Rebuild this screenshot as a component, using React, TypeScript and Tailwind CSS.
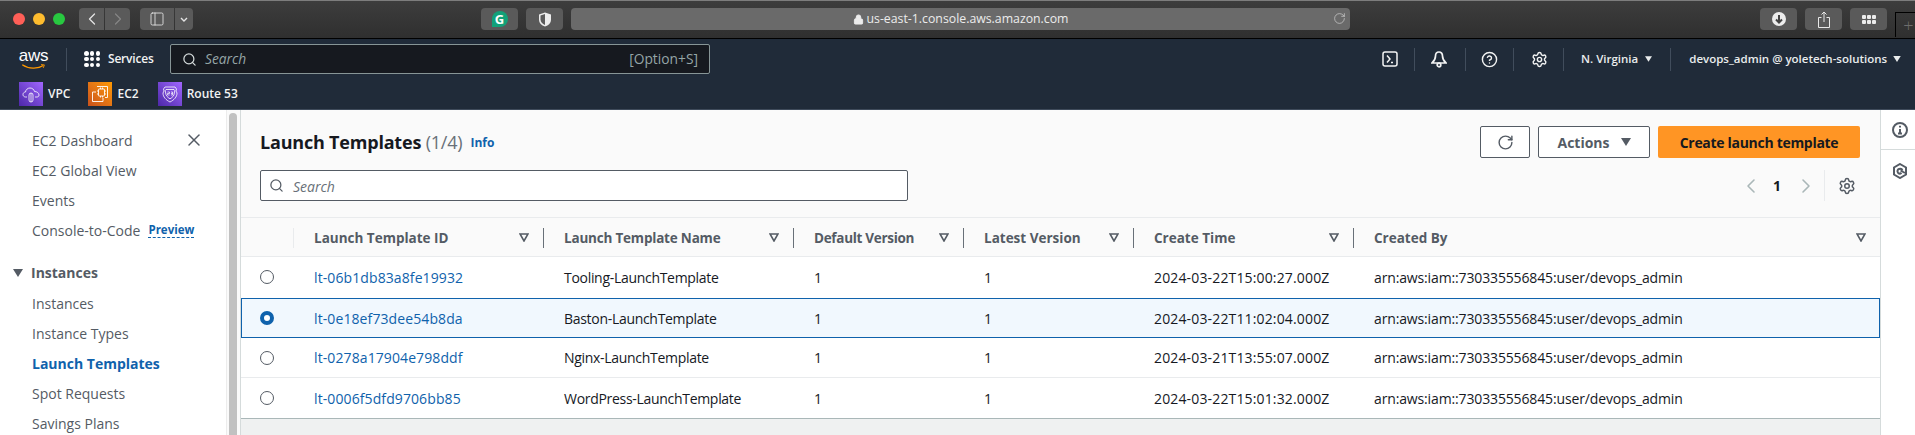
import { ChevronLeft, ChevronRight, CircleHelp, Lock, PanelLeft, RotateCw, Search, Settings, X } from "lucide-react";

const FONT = "font-['Open_Sans','Noto_Sans',sans-serif]";

const ROWS = [
  { id: "lt-06b1db83a8fe19932", name: "Tooling-LaunchTemplate", time: "2024-03-22T15:00:27.000Z", rowClass: "h-[41px] border-b border-transparent" },
  { id: "lt-0e18ef73dee54b8da", name: "Baston-LaunchTemplate", time: "2024-03-22T11:02:04.000Z", selected: true, rowClass: "h-[40px] bg-[#f1f8fe] outline outline-1 -outline-offset-1 outline-[#0f62ac]" },
  { id: "lt-0278a17904e798ddf", name: "Nginx-LaunchTemplate", time: "2024-03-21T13:55:07.000Z", rowClass: "h-[40px] border-b border-[#e9ebed]" },
  { id: "lt-0006f5dfd9706bb85", name: "WordPress-LaunchTemplate", time: "2024-03-22T15:01:32.000Z", rowClass: "h-[40px]" },
];

const COLUMNS = [
  { label: "Launch Template ID", className: "border-r border-[#687078]" },
  { label: "Launch Template Name", className: "border-r border-[#687078] tracking-[-0.2px]" },
  { label: "Default Version", className: "border-r border-[#687078] tracking-[-0.3px]" },
  { label: "Latest Version", className: "border-r border-[#687078]" },
  { label: "Create Time", className: "border-r border-[#687078]" },
  { label: "Created By", className: "" },
];

const GRID = "grid grid-cols-[53px_250px_250px_170px_170px_220px_1fr]";

function Caret({ className }: { className: string }) {
  return (
    <svg viewBox="0 0 10 8" className={className} fill="currentColor" aria-hidden>
      <path d="M0 0h10L5 8z" />
    </svg>
  );
}

function FilterIcon() {
  return (
    <svg viewBox="0 0 10 9" className="h-[9px] w-[10px] text-[#545b64]" fill="none" stroke="currentColor" strokeWidth="1.6" aria-hidden>
      <path d="M1 1h8L5 8z" />
    </svg>
  );
}

function Chrome({ className, children }: { className: string; children?: React.ReactNode }) {
  return <div className={`flex h-[22px] items-center justify-center rounded-[4px] bg-[#5a5a5a] ${className}`}>{children}</div>;
}

function BrowserBar() {
  return (
    <div className="flex h-[39px] shrink-0 items-center border-b border-t border-b-black border-t-[#7d7d7d] bg-gradient-to-b from-[#3d3d3d] to-[#2f2f2f] pb-[1px]">
      <span className="ml-[13px] h-[12px] w-[12px] rounded-full bg-[#ff5f57]" />
      <span className="ml-[8px] h-[12px] w-[12px] rounded-full bg-[#febc2e]" />
      <span className="ml-[8px] h-[12px] w-[12px] rounded-full bg-[#28c840]" />
      <Chrome className="ml-[14px] w-[25px] rounded-r-none">
        <ChevronLeft className="h-5 w-5 text-[#e4e4e4]" strokeWidth={1.5} />
      </Chrome>
      <Chrome className="ml-[1px] w-[25px] rounded-l-none">
        <ChevronRight className="h-5 w-5 text-[#858585]" strokeWidth={1.5} />
      </Chrome>
      <Chrome className="ml-[10px] w-[34px] rounded-r-none">
        <PanelLeft className="h-[16px] w-[16px] text-[#e4e4e4]" strokeWidth={1.3} />
      </Chrome>
      <Chrome className="ml-[1px] w-[18px] rounded-l-none">
        <svg viewBox="0 0 8 5" className="h-[5px] w-[8px] text-[#e4e4e4]" fill="none" stroke="currentColor" strokeWidth="1.4">
          <path d="M1 1l3 3 3-3" />
        </svg>
      </Chrome>
      <Chrome className="ml-[288px] w-[37px]">
        <span className="flex h-[16px] w-[16px] items-center justify-center rounded-full rounded-bl-[1px] bg-[#12a179] text-[13px] font-bold leading-none text-white">G</span>
      </Chrome>
      <Chrome className="ml-[8px] w-[37px]">
        <svg viewBox="0 0 12 14" className="h-[15px] w-[12px]" aria-hidden>
          <path d="M6 0l6 2v5c0 3.500-2.500 6-6 7-3.500-1-6-3.500-6-7V2z" fill="#ececec" />
          <path d="M6 1.500V12.500c-2.600-1-4.500-3-4.500-5.500V3z" fill="#5a5a5a" />
        </svg>
      </Chrome>
      <div className="relative ml-[8px] flex h-[22px] flex-1 items-center justify-center rounded-[4px] bg-[#6a6a6a] text-[12.300px] text-[#ececec]">
        <Lock className="mr-[3px] h-[11px] w-[11px] fill-[#ececec] text-[#ececec]" strokeWidth={2} />
        us-east-1.console.aws.amazon.com
        <RotateCw className="absolute right-[4px] top-[4px] h-[13px] w-[13px] text-[#d5d5d5]" strokeWidth={1.2} />
      </div>
      <Chrome className="ml-[410px] w-[37px]">
        <svg viewBox="0 0 14 14" className="h-[14px] w-[14px]" aria-hidden>
          <circle cx="7" cy="7" r="7" fill="#ededed" />
          <path d="M7 3v7M4 7.500L7 10.500l3-3" fill="none" stroke="#444" strokeWidth="2" />
        </svg>
      </Chrome>
      <Chrome className="ml-[8px] w-[37px]">
        <svg viewBox="0 0 12 17" className="h-[17px] w-[12px]" fill="none" stroke="#e8e8e8" strokeWidth="1" aria-hidden>
          <path d="M3.500 6.500H.5v10h11v-10h-3M6 11V1M3.500 3.500L6 1l2.500 2.500" />
        </svg>
      </Chrome>
      <Chrome className="ml-[8px] w-[37px]">
        <span className="grid grid-cols-3 gap-[1px]">
          {Array.from({ length: 6 }).map((_, i) => (
            <span key={i} className="h-[4px] w-[4px] rounded-[1px] bg-[#ececec]" />
          ))}
        </span>
      </Chrome>
      <div className="ml-[8px] flex h-[25px] w-[20px] items-center justify-center self-end border-l border-t border-black pl-[6px] text-[18px] font-light text-[#6d6d6d]">+</div>
    </div>
  );
}

function VpcIcon() {
  return (
    <span className="flex h-[24px] w-[24px] items-center justify-center bg-gradient-to-tr from-[#4d27a8] to-[#a166ff]">
      <svg viewBox="0 0 18 18" className="h-[18px] w-[18px]" fill="none" stroke="white" strokeWidth="0.8">
        <path d="M5 12H3.500C2 12 1 10.800 1 9.500 1 8 2.200 7 3.500 7 3.800 4.500 5.800 3 8 3c2.200 0 4 1.400 4.500 3.500 2.500 0 4.500 1.500 4.500 3.500 0 1.300-1 2-2 2h-2" />
        <rect x="7" y="8" width="4" height="9" rx="2" />
        <path d="M9 8v9" />
      </svg>
    </span>
  );
}

function Ec2Icon() {
  return (
    <span className="flex h-[24px] w-[24px] items-center justify-center bg-gradient-to-tr from-[#c8511b] to-[#ff9900]">
      <svg viewBox="0 0 18 18" className="h-[18px] w-[18px]" fill="none" stroke="white" strokeWidth="0.9">
        <rect x="7.500" y="4" width="6" height="7" rx="0.5" />
        <path d="M6 1.500h10.500v11H14M5 7H1.500v9.500H12V13M9.500 4V2.500M11.500 4V2.500M9.500 11v1.500M11.500 11v1.500M13.500 6H15M13.500 9H15M7.500 6H6M7.500 9H6" />
      </svg>
    </span>
  );
}

function RouteIcon() {
  return (
    <span className="flex h-[24px] w-[24px] items-center justify-center bg-gradient-to-tr from-[#4d27a8] to-[#a166ff]">
      <svg viewBox="0 0 18 18" className="h-[18px] w-[18px]" fill="none" stroke="white" strokeWidth="0.8">
        <path d="M4 2h10l1.500 2-.5 2 1 2c0 4-3 7-7 9-4-2-7-5-7-9l1-2-.5-2z" />
        <path d="M5 4.500h8l.8 1.200-.5 2.300c0 2.500-1.800 4.400-4.300 5.800C6.500 12.400 4.700 10.500 4.700 8l-.5-2.300z" />
        <path d="M6.500 7h2v1.500h-2V10h2M10 7h1.500v3H10M10 8.500h1.500" strokeWidth="0.7" />
      </svg>
    </span>
  );
}

function NavDivider({ className }: { className: string }) {
  return <span className={`h-[23px] w-px bg-[#414d5c] ${className}`} />;
}

function ConsoleNav() {
  return (
    <div className="h-[71px] shrink-0 border-b border-[#3f4b5b] bg-[#202b39] text-white">
      <div className="flex h-[40px] items-center">
        <div className="ml-[18px] flex h-[22px] w-[31px] flex-col items-center">
          <span className="h-[15px] font-['Liberation_Sans',sans-serif] text-[17px] leading-[15px] tracking-[-0.3px]">aws</span>
          <svg viewBox="0 0 32 8" className="mt-[1px] h-[7px] w-[31px]" fill="none" aria-hidden>
            <path d="M1 1c8 5.500 21 6 28 1" stroke="#f90" strokeWidth="1.600" />
            <path d="M26 .8l4.500.4-1.500 4" stroke="#f90" strokeWidth="1.200" />
          </svg>
        </div>
        <NavDivider className="ml-[17px]" />
        <span className="ml-[17px] grid grid-cols-3 gap-[1.250px]">
          {Array.from({ length: 9 }).map((_, i) => (
            <span key={i} className="h-[4.500px] w-[4.500px] rounded-full bg-white" />
          ))}
        </span>
        <span className="ml-[8px] w-[62px] text-[12px] font-semibold tracking-[-0.2px] text-[#f2f3f3]">Services</span>
        <div className="flex h-[30px] w-[540px] items-center rounded-[2px] border border-[#879596] bg-[#16191f] pl-[11px] pr-[11px] text-[13.800px] text-[#95a5a6]">
          <Search className="h-[15px] w-[15px] text-[#d5dbdb]" strokeWidth={2} />
          <span className="ml-[8px] italic">Search</span>
          <span className="ml-auto">[Option+S]</span>
        </div>
        <svg viewBox="0 0 16 16" className="ml-[672px] h-[16px] w-[16px]" fill="none" stroke="#f2f3f3" strokeWidth="1.500" aria-hidden>
          <rect x="1" y="1" width="14" height="14" rx="2" />
          <path d="M5 4.500L8 8l-3 3.500M9 11.500h2" />
        </svg>
        <NavDivider className="ml-[16px]" />
        <svg viewBox="0 0 16 17" className="ml-[16px] h-[17px] w-[16px]" fill="none" stroke="#f2f3f3" strokeWidth="1.700" aria-hidden>
          <path d="M8 1C5.800 1 4.500 2.700 4.500 5c0 3-1.500 5.300-3.500 7h14c-2-1.700-3.500-4-3.500-7C11.500 2.700 10.200 1 8 1z" />
          <circle cx="8" cy="14" r="1.800" />
        </svg>
        <NavDivider className="ml-[18px]" />
        <CircleHelp className="ml-[15px] h-[17px] w-[17px] text-[#f2f3f3]" strokeWidth={2} />
        <NavDivider className="ml-[15px]" />
        <Settings className="ml-[17px] h-[17px] w-[17px] text-[#f2f3f3]" strokeWidth={2} />
        <NavDivider className="ml-[15px]" />
        <span className="ml-[17px] text-[11.500px] font-semibold text-[#eaeded]">N. Virginia</span>
        <Caret className="ml-[7px] h-[6px] w-[7px] text-[#eaeded]" />
        <NavDivider className="ml-[18px]" />
        <span className="ml-[18px] text-[11.500px] font-semibold text-[#eaeded]">devops_admin @ yoletech-solutions</span>
        <Caret className="ml-[6px] h-[6px] w-[8px] text-[#eaeded]" />
      </div>
      <div className="flex h-[30px] items-start pt-[3px] text-[12px] font-semibold text-[#f2f3f3]">
        <div className="ml-[19px] flex items-center">
          <VpcIcon />
          <span className="ml-[5px]">VPC</span>
        </div>
        <div className="ml-[18px] flex items-center">
          <Ec2Icon />
          <span className="ml-[5px]">EC2</span>
        </div>
        <div className="ml-[19px] flex items-center">
          <RouteIcon />
          <span className="ml-[5px]">Route 53</span>
        </div>
      </div>
    </div>
  );
}

function SideItem({ label, active }: { label: string; active?: boolean }) {
  return <div className={`flex h-[30px] shrink-0 items-center pl-[32px] text-[14px] ${active ? "font-bold text-[#0f62ac]" : "text-[#545b64]"}`}>{label}</div>;
}

function Sidebar() {
  return (
    <aside className="flex w-[226px] shrink-0 flex-col overflow-hidden bg-white pt-[15px]">
      <div className="flex h-[30px] shrink-0 items-center pr-[22px]">
        <div className="flex-1 pl-[32px] text-[14px] text-[#545b64]">EC2 Dashboard</div>
        <X className="h-[20px] w-[20px] text-[#545b64]" strokeWidth={1.8} />
      </div>
      <SideItem label="EC2 Global View" />
      <SideItem label="Events" />
      <div className="flex h-[30px] shrink-0 items-center pl-[32px] text-[14px] text-[#545b64]">
        Console-to-Code
        <span className="ml-[8px] border-b border-dashed border-[#0f62ac] text-[11.500px] font-bold leading-[15px] text-[#0f62ac]">Preview</span>
      </div>
      <div className="mt-[12px] flex h-[31px] shrink-0 items-center pl-[13px] text-[14px] font-bold text-[#545b64]">
        <Caret className="h-[8px] w-[10px] text-[#545b64]" />
        <span className="ml-[8px]">Instances</span>
      </div>
      <SideItem label="Instances" />
      <SideItem label="Instance Types" />
      <SideItem label="Launch Templates" active />
      <SideItem label="Spot Requests" />
      <SideItem label="Savings Plans" />
    </aside>
  );
}

function Toolbar() {
  return (
    <div className="flex h-[108px] shrink-0 justify-between border-b border-[#e9ebed] pl-[19px] pr-[20px] pt-[16px]">
      <div>
        <div className="flex h-[32px] items-center">
          <h1 className="text-[18px] font-bold tracking-[-0.2px] text-[#16191f]">
            Launch Templates <span className="font-normal text-[#687078]">(1/4)</span>
          </h1>
          <span className="ml-[8px] mt-[2px] text-[12px] font-bold text-[#0f62ac]">Info</span>
        </div>
        <div className="mt-[12px] flex h-[31px] w-[648px] items-center rounded-[2px] border border-[#545b64] bg-white pl-[8px] text-[14px] italic text-[#687078]">
          <Search className="h-[15px] w-[15px] text-[#545b64]" strokeWidth={2} />
          <span className="ml-[9px] pt-[1px]">Search</span>
        </div>
      </div>
      <div className="flex flex-col items-end">
        <div className="flex h-[32px] gap-[8px]">
          <button type="button" className="flex w-[50px] items-center justify-center rounded-[2px] border border-[#545b64] bg-white">
            <RotateCw className="h-[17px] w-[17px] text-[#545b64]" strokeWidth={2} />
          </button>
          <button type="button" className="flex w-[112px] items-center justify-center rounded-[2px] border border-[#545b64] bg-white text-[14px] font-bold text-[#545b64]">
            Actions
            <Caret className="ml-[11px] h-[8px] w-[10px] text-[#545b64]" />
          </button>
          <button type="button" className="w-[202px] rounded-[2px] bg-[#ff9524] text-[14px] font-bold tracking-[-0.3px] text-[#16191f]">
            Create launch template
          </button>
        </div>
        <div className="mt-[12px] flex h-[31px] items-center pr-[4px]">
          <ChevronLeft className="h-[24px] w-[24px] text-[#aab7b8]" strokeWidth={1.6} />
          <span className="ml-[10px] text-[14px] font-bold text-[#16191f]">1</span>
          <ChevronRight className="ml-[13px] h-[24px] w-[24px] text-[#aab7b8]" strokeWidth={1.6} />
          <span className="ml-[6px] h-[31px] w-px bg-[#e9ebed]" />
          <Settings className="ml-[13px] h-[18px] w-[18px] text-[#545b64]" strokeWidth={2} />
        </div>
      </div>
    </div>
  );
}

function Table() {
  return (
    <div className="shrink-0 bg-white text-[14px] text-[#16191f]">
      <div className={`${GRID} h-[39px] items-center border-b border-[#e9ebed] bg-[#fafafa] pt-[1px] text-[13.500px] font-bold text-[#545b64]`}>
        <div className="h-[20px] border-r border-[#e9ebed]" />
        {COLUMNS.map((col) => (
          <div key={col.label} className={`flex h-[20px] items-center pl-[20px] pr-[14px] ${col.className}`}>
            <span className="flex-1 pt-[1px]">{col.label}</span>
            <FilterIcon />
          </div>
        ))}
      </div>
      {ROWS.map((row) => (
        <div key={row.id} className={`${GRID} items-center ${row.rowClass}`}>
          <div className="pl-[19px]">
            {row.selected ? (
              <span className="block h-[14px] w-[14px] rounded-full border-[4px] border-[#0f62ac] bg-white" />
            ) : (
              <span className="block h-[14px] w-[14px] rounded-full border border-[#545b64] bg-white" />
            )}
          </div>
          <div className="pl-[20px] tracking-[0.1px] text-[#0f62ac]">{row.id}</div>
          <div className="pl-[20px] tracking-[-0.3px]">{row.name}</div>
          <div className="pl-[20px]">1</div>
          <div className="pl-[20px]">1</div>
          <div className="pl-[20px] tracking-[0.15px]">{row.time}</div>
          <div className="pl-[20px] tracking-[-0.14px]">arn:aws:iam::730335556845:user/devops_admin</div>
        </div>
      ))}
    </div>
  );
}

function RightRail() {
  return (
    <aside className="flex w-[35px] shrink-0 flex-col border-l border-[#d5dbdb] bg-white">
      <div className="flex h-[40px] w-full items-center justify-center border-b border-[#d5dbdb] pl-[3px]">
        <svg viewBox="0 0 16 16" className="h-[16px] w-[16px]" fill="none" stroke="#545b64" strokeWidth="2" aria-hidden>
          <circle cx="8" cy="8" r="7" />
          <path d="M8 7v4.500M6 11.500h4M8 3.800v1.700" />
        </svg>
      </div>
      <div className="mt-[13px] flex justify-center pl-[3px]">
        <svg viewBox="0 0 16 16" className="h-[16px] w-[16px]" fill="none" stroke="#545b64" strokeWidth="2" aria-hidden>
          <path d="M8 1l6 3.500v7L8 15l-6-3.500v-7z" />
          <path d="M13 10L8.500 7.500M10.500 7.500C10 6 8.500 5.500 7 6c-1.500.5-2 2.500-1 3.700 1 1 2.500 1 3.500 0" />
        </svg>
      </div>
    </aside>
  );
}

export default function App() {
  return (
    <div className={`flex h-screen flex-col overflow-hidden bg-white ${FONT}`}>
      <BrowserBar />
      <ConsoleNav />
      <div className="flex min-h-0 flex-1">
        <Sidebar />
        <div className="w-[14px] shrink-0 border-l border-[#ececec] bg-[#fafafa] pl-[2px] pt-[3px]">
          <div className="h-full w-[8px] rounded-t-full bg-[#c1c1c1]" />
        </div>
        <main className="flex min-w-0 flex-1 flex-col border-l border-[#d5dbdb] bg-[#fafafa]">
          <Toolbar />
          <Table />
          <div className="flex-1 border-t border-[#aab7b8] bg-[#eff1f1]" />
        </main>
        <RightRail />
      </div>
    </div>
  );
}
